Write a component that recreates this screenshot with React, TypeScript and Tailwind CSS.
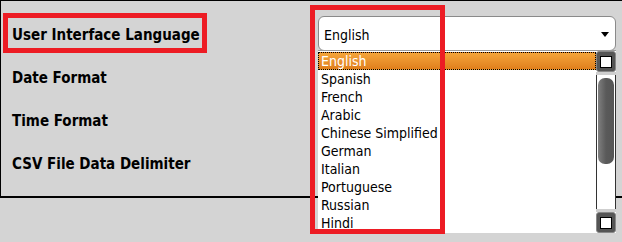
const labels = ['User Interface Language', 'Date Format', 'Time Format', 'CSV File Data Delimiter'];

const languages = [
  'English',
  'Spanish',
  'French',
  'Arabic',
  'Chinese Simplified',
  'German',
  'Italian',
  'Portuguese',
  'Russian',
  'Hindi',
];

const font = { fontFamily: '"DejaVu Sans Condensed", Tahoma, "DejaVu Sans", sans-serif' };

function ScrollButton() {
  return (
    <div className="h-[21px] w-[20px] rounded-[3px] bg-[#555] border border-[#888] flex items-center justify-center">
      <div className="w-[12px] h-[12px] bg-white border border-black" />
    </div>
  );
}

export default function App() {
  return (
    <div className="relative w-[622px] h-[242px] bg-[#d4d4d4] overflow-hidden text-black" style={font}>
      {/* Settings panel */}
      <div className="h-[198px] border-t border-l border-b-2 border-black flex">
        <div className="w-[317px] pt-[25px] pl-[11px]">
          {labels.map((label) => (
            <div key={label} className="h-[43px] text-[15px] leading-[18px] font-bold">
              {label}
            </div>
          ))}
        </div>

        <div className="pt-[15px]">
          <div className="w-[298px] h-[35px] bg-white border border-[#8a8a8a] rounded-[6px] flex items-center justify-between pl-[5px] pr-[6px]">
            <span className="text-[14px] leading-[18px] pt-[3px]">English</span>
            <svg width="8" height="5" viewBox="0 0 8 5" className="mt-[1px]">
              <path d="M0 0h8L4 5z" fill="#000" />
            </svg>
          </div>
        </div>
      </div>

      {/* Open dropdown */}
      <div className="absolute left-[318px] top-[50px] w-[298px] h-[183px] bg-white border-t border-[#9a9a9a] flex">
        <div className="flex-1 pt-px">
          {languages.map((lang, i) => (
            <div
              key={lang}
              className={
                i === 0
                  ? 'h-[18px] pl-[2px] text-[14px] leading-[17px] text-white bg-gradient-to-b from-[#f4a53a] to-[#e07f1c] border border-dotted border-black'
                  : 'h-[18px] pl-[3px] text-[14px] leading-[19px]'
              }
            >
              {lang}
            </div>
          ))}
        </div>
        <div className="w-[20px] flex flex-col">
          <ScrollButton />
          <div className="h-[3px] bg-[#cfcfcf]" />
          <div className="flex-1 bg-white border-x border-[#333] pt-[3px]">
            <div className="h-[86px] mx-px rounded-[7px] bg-gradient-to-r from-[#808080] via-[#5a5a5a] to-[#555]" />
          </div>
          <div className="h-[3px] bg-[#cfcfcf]" />
          <ScrollButton />
        </div>
      </div>

      {/* Annotation boxes */}
      <div className="absolute left-[3px] top-[13px] w-[204px] h-[40px] border-[5px] border-[#ed1c24]" />
      <div className="absolute left-[310px] top-[5px] w-[135px] h-[229px] border-[5px] border-[#ed1c24]" />
    </div>
  );
}
